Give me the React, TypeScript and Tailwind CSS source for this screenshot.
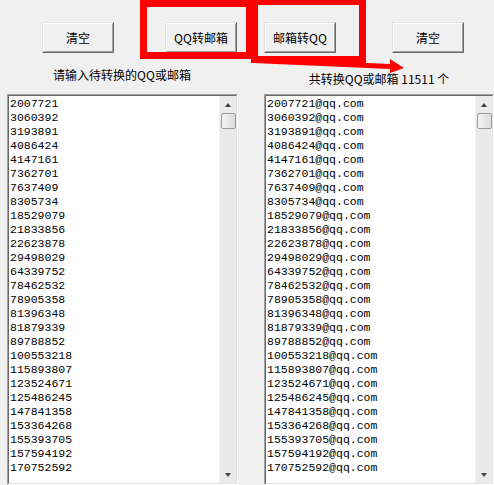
import React from "react";

const qqs = [
  "2007721", "3060392", "3193891", "4086424", "4147161", "7362701", "7637409",
  "8305734", "18529079", "21833856", "22623878", "29498029", "64339752",
  "78462532", "78905358", "81396348", "81879339", "89788852", "100553218",
  "115893807", "123524671", "125486245", "147841358", "153364268", "155393705",
  "157594192", "170752592",
];

const cjk = { fontFamily: '"Noto Sans CJK SC", "Liberation Sans", sans-serif' };
const mono = { fontFamily: '"Liberation Mono", "DejaVu Sans Mono", monospace' };

function WinButton({ label, className }: { label: string; className?: string }) {
  return (
    <button
      type="button"
      className={
        "h-[31px] w-[72px] border border-t-[#e3e3e3] border-l-[#e3e3e3] border-r-[#696969] border-b-[#696969] " +
        (className ?? "")
      }
    >
      <div
        className="flex h-full w-full items-center justify-center border border-t-white border-l-white border-r-[#a0a0a0] border-b-[#a0a0a0] bg-[#f0f0f0] text-[12px] leading-none text-black"
        style={cjk}
      >
        {label}
      </div>
    </button>
  );
}

function ListBox({ lines, width }: { lines: string[]; width: string }) {
  return (
    <div className={"h-[391px] border border-t-[#a0a0a0] border-l-[#a0a0a0] border-r-white border-b-white " + width}>
      <div className="flex h-full border border-t-[#696969] border-l-[#696969] border-r-[#e3e3e3] border-b-[#e3e3e3] bg-white">
        <div className="flex-1 overflow-hidden pt-[1px] pl-[1px] text-[11.5px] leading-[14px] text-black" style={mono}>
          {lines.map((l) => (
            <div key={l} className="whitespace-pre">{l}</div>
          ))}
        </div>
        {/* scrollbar */}
        <div className="flex w-[17px] flex-col items-center border-l border-[#f0f0f0] bg-[#eaeaea]">
          <div className="flex h-[17px] w-full items-center justify-center">
            <div className="h-0 w-0 border-x-[3.5px] border-b-[4px] border-x-transparent border-b-[#404040]" />
          </div>
          <div className="h-[16px] w-[15px] rounded-[2px] border border-[#9a9a9a] bg-gradient-to-r from-[#f4f4f4] to-[#dcdcdc]" />
          <div className="flex-1" />
          <div className="flex h-[17px] w-full items-center justify-center">
            <div className="h-0 w-0 border-x-[3.5px] border-t-[4px] border-x-transparent border-t-[#404040]" />
          </div>
        </div>
      </div>
    </div>
  );
}

export default function App() {
  return (
    <div className="relative h-[485px] w-[494px] overflow-hidden bg-[#f0f0f0]">
      <div className="flex pt-[22px]">
        <WinButton label="清空" className="ml-[42px]" />
        <WinButton label="QQ转邮箱" className="ml-[51px]" />
        <WinButton label="邮箱转QQ" className="ml-[27px]" />
        <WinButton label="清空" className="ml-[56px]" />
      </div>

      <div className="flex pl-[7px] pt-[15px] text-[12px] leading-[14px] text-black" style={cjk}>
        <div className="w-[230px] text-center">请输入待转换的QQ或邮箱</div>
        <div className="ml-[27px] w-[230px] pt-[4px] text-center">共转换QQ或邮箱 11511 个</div>
      </div>

      <div className="flex pl-[7px] pt-[8px]">
        <ListBox lines={qqs} width="w-[231px]" />
        <div className="w-[26px]" />
        <ListBox lines={qqs.map((q) => q + "@qq.com")} width="w-[230px]" />
      </div>

      {/* red annotation boxes */}
      <div className="absolute left-[140px] top-0 h-[59px] w-[113px] border-[7px] border-[#ff0000]" />
      <div className="absolute left-[251px] top-[-2px] h-[65px] w-[115px] border-[7px] border-[#ff0000]" />
      <svg className="absolute left-0 top-0" width="494" height="485" viewBox="0 0 494 485">
        <polygon points="253,58 390,64 390,59 404,68 390,73 390,69 253,63" fill="#ff0000" />
      </svg>
    </div>
  );
}
